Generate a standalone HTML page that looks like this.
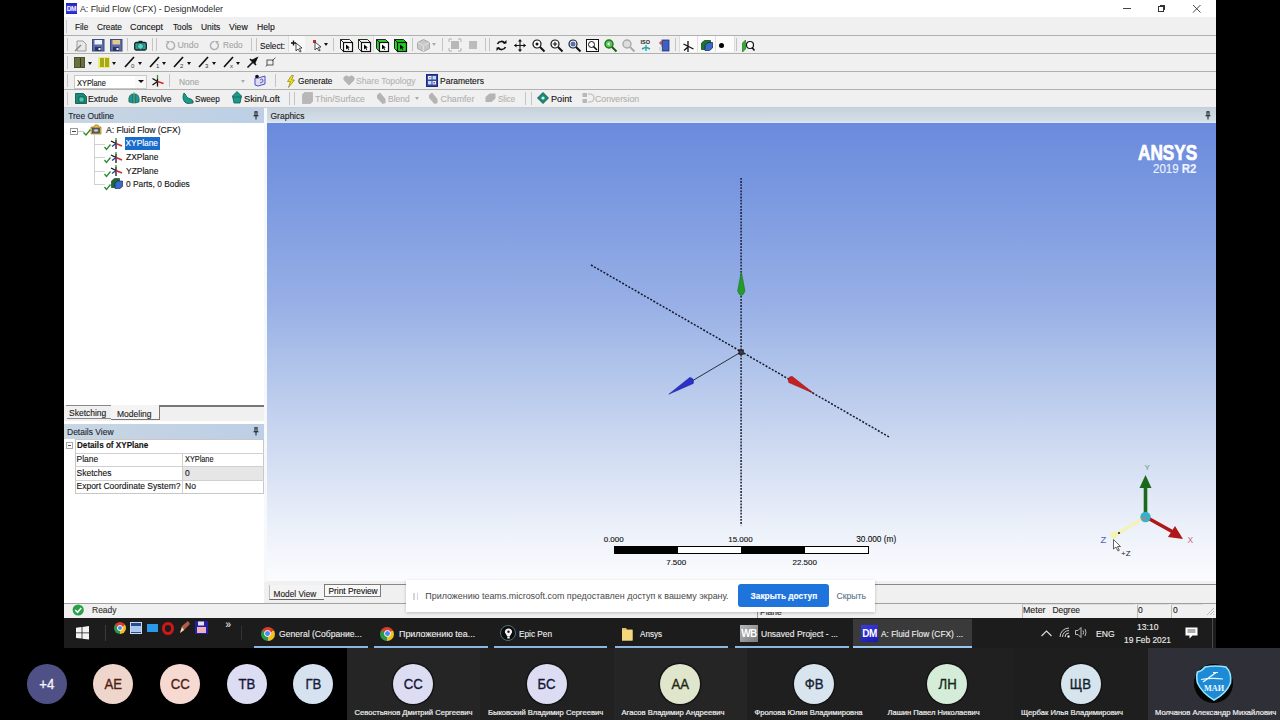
<!DOCTYPE html>
<html><head><meta charset="utf-8">
<style>
*{margin:0;padding:0;box-sizing:border-box}
html,body{width:1280px;height:720px;overflow:hidden;background:#000;font-family:"Liberation Sans",sans-serif;position:relative}
.a{position:absolute}
.t{position:absolute;white-space:nowrap;font-size:8.5px;color:#141414;line-height:12px;-webkit-text-stroke:0.12px currentColor}
.hl{position:absolute;height:1px;background:#b0b0b0}
.vs{position:absolute;width:1px;height:13px;background:#c4c4c4}
.dd{position:absolute;width:0;height:0;border-left:2.5px solid transparent;border-right:2.5px solid transparent;border-top:3px solid #111}
svg{position:absolute;overflow:visible}
.g{color:#a6a6a6}
#row1 .t{margin-top:1.2px}
#row1 svg{margin-top:0.8px}
#row3 .t{margin-top:0.6px}
#row4 .t{margin-top:1.3px}
</style></head><body>
<!-- app window -->
<div class="a" style="left:64px;top:0;width:1152px;height:618px;background:#f0f0f0"></div>
<!-- title bar -->
<div class="a" style="left:64px;top:0;width:1152px;height:17px;background:#fff"></div>
<div class="a" style="left:65.5px;top:2.5px;width:11.5px;height:11.5px;background:linear-gradient(#2020b8,#4a4af0 60%,#2424c0);color:#f0f0ff;font-size:6.5px;font-weight:bold;line-height:11.5px;text-align:center;letter-spacing:-0.6px">DM</div>
<div class="t" style="left:80px;top:3px;font-size:8.75px;color:#2a2a2a;-webkit-text-stroke:0">A: Fluid Flow (CFX) - DesignModeler</div>
<div class="a" style="left:1123px;top:8px;width:8px;height:1px;background:#444"></div>
<div class="a" style="left:1158px;top:6px;width:6px;height:6px;border:1px solid #333"></div>
<div class="a" style="left:1160px;top:5px;width:5px;height:1px;background:#333"></div>
<div class="a" style="left:1164px;top:5px;width:1px;height:5px;background:#333"></div>
<svg style="left:1193px;top:5px" width="8" height="8"><path d="M0 0L7.5 7.5M7.5 0L0 7.5" stroke="#333" stroke-width="0.9"/></svg>

<!-- menu -->
<div class="a" style="left:66px;top:20px;width:1px;height:13px;background:#c8c8c8"></div>
<div class="t" style="left:74.5px;top:20.8px;font-size:8.8px;transform:scaleX(0.937);transform-origin:left center">File</div>
<div class="t" style="left:96.8px;top:20.8px;font-size:8.8px;transform:scaleX(0.947);transform-origin:left center">Create</div>
<div class="t" style="left:130px;top:20.8px;font-size:8.8px;transform:scaleX(1.007);transform-origin:left center">Concept</div>
<div class="t" style="left:172.6px;top:20.8px;font-size:8.8px;transform:scaleX(0.934);transform-origin:left center">Tools</div>
<div class="t" style="left:200.8px;top:20.8px;font-size:8.8px;transform:scaleX(0.958);transform-origin:left center">Units</div>
<div class="t" style="left:228.9px;top:20.8px;font-size:8.8px;transform:scaleX(0.991);transform-origin:left center">View</div>
<div class="t" style="left:256.5px;top:20.8px;font-size:8.8px;transform:scaleX(0.983);transform-origin:left center">Help</div>

<!-- toolbar lines -->
<div class="hl" style="left:64px;top:35px;width:1152px"></div>
<div class="hl" style="left:64px;top:53px;width:1152px"></div>
<div class="hl" style="left:64px;top:71px;width:1152px"></div>
<div class="hl" style="left:64px;top:89px;width:1152px"></div>
<div class="hl" style="left:64px;top:107px;width:1152px;background:#c8ccd0"></div>
<!-- grips -->
<div class="vs" style="left:67px;top:38px"></div>
<div class="vs" style="left:67px;top:56px"></div>
<div class="vs" style="left:67px;top:74px"></div>
<div class="vs" style="left:67px;top:92px"></div>

<!-- ROW1 -->
<div id="row1">
<svg style="left:74px;top:38px" width="13" height="13"><path d="M3 2h6l3 3v7H3z" fill="#e8e8e8" stroke="#9a9a9a"/><path d="M1 12l6-6" stroke="#888" stroke-width="1.5"/></svg>
<svg style="left:91.5px;top:38.5px" width="13" height="13"><rect x="0.5" y="0.5" width="11.5" height="11.5" fill="#5a6aa6" stroke="#3c4a80"/><rect x="2.5" y="1" width="7.5" height="4.5" fill="#eef2fa"/><rect x="3" y="8" width="6" height="4" fill="#2a3660"/><rect x="6.5" y="9" width="2" height="2" fill="#f0f4ff"/></svg>
<svg style="left:110px;top:38.5px" width="13" height="13"><rect x="0.5" y="0.5" width="11.5" height="11.5" fill="#5a6aa6" stroke="#3c4a80"/><rect x="2.5" y="1" width="7.5" height="4.5" fill="#e8c890"/><rect x="3" y="8" width="6" height="4" fill="#2a3660"/><rect x="6.5" y="9" width="2" height="2" fill="#f0f4ff"/></svg>
<div class="vs" style="left:127px;top:38px"></div>
<svg style="left:133.5px;top:39.5px" width="13" height="11"><rect x="0.7" y="2.5" width="11.6" height="7.5" rx="1.5" fill="#3a9a90" stroke="#1a2628" stroke-width="1.3"/><rect x="4.5" y="0.8" width="4" height="2" fill="#1a2628"/><circle cx="6.5" cy="6.3" r="3" fill="#48d8c8" stroke="#1a3a38" stroke-width="0.6"/></svg>
<div class="vs" style="left:152px;top:38px"></div>
<div class="vs" style="left:156px;top:38px"></div>
<svg style="left:165px;top:39px" width="11" height="11"><path d="M2.5 3A4 4 0 1 0 5.5 1.5" fill="none" stroke="#b0b0b0" stroke-width="1.5"/><path d="M1 1l2.5 3L5 1z" fill="#b0b0b0"/></svg>
<div class="t g" style="left:177.5px;top:38px;font-size:8.8px;transform:scaleX(1.000);transform-origin:left center">Undo</div>
<svg style="left:209px;top:39px" width="11" height="11"><path d="M8.5 3A4 4 0 1 1 5.5 1.5" fill="none" stroke="#b0b0b0" stroke-width="1.5"/><path d="M10 1l-2.5 3L6 1z" fill="#b0b0b0"/></svg>
<div class="t g" style="left:222.5px;top:38px;font-size:8.8px;transform:scaleX(0.932);transform-origin:left center">Redo</div>
<div class="vs" style="left:251px;top:38px"></div>
<div class="vs" style="left:256px;top:38px"></div>
<div class="t" style="left:259.5px;top:38.8px;font-size:8.8px;transform:scaleX(0.932);transform-origin:left center">Select:</div>
<div class="a" style="left:288px;top:36px;width:17px;height:16px;background:#f8f8f8;border-left:1px solid #ddd"></div>
<svg style="left:290px;top:39px" width="14" height="12"><path d="M1 3h5M3.5 0.5v5" stroke="#111" stroke-width="1.3"/><path d="M6 3l0 8 2-2 2 3 1.2-.7-2-3 2.8-.3z" fill="#fff" stroke="#222" stroke-width="0.8"/></svg>
<svg style="left:313px;top:39px" width="10" height="12"><rect x="0" y="0" width="3" height="3" fill="#c03030"/><path d="M2 2l0 8 2-2 2 3 1.2-.7-2-3 2.8-.3z" fill="#fff" stroke="#222" stroke-width="0.8"/></svg>
<div class="dd" style="left:323.5px;top:43px"></div>
<div class="vs" style="left:333px;top:38px"></div>
<svg style="left:340px;top:38.2px" width="13" height="13"><path d="M0.5 0.5h9l3 3h-9z" fill="#fff" stroke="#111" stroke-width="0.9"/><path d="M0.5 0.5l3 3v9l-3-3z" fill="#fff" stroke="#111" stroke-width="0.9"/><rect x="3.5" y="3.5" width="9" height="9" fill="#fff" stroke="#111" stroke-width="1.2"/><path d="M6 5.5v5l1.3-1.3 1.2 1.8.8-.5-1.2-1.8 1.8-.2z" fill="#000"/></svg>
<svg style="left:358px;top:38.2px" width="13" height="13"><path d="M0.5 0.5h9l3 3h-9z" fill="#e8f8e8" stroke="#111" stroke-width="0.9"/><path d="M0.5 0.5l3 3v9l-3-3z" fill="#e8f8e8" stroke="#111" stroke-width="0.9"/><rect x="3.5" y="3.5" width="9" height="9" fill="#fff" stroke="#111" stroke-width="1.2"/><path d="M6 5.5v5l1.3-1.3 1.2 1.8.8-.5-1.2-1.8 1.8-.2z" fill="#000"/></svg>
<div class="a" style="left:373px;top:36px;width:36px;height:16px;background:#f6f6f6;border-left:1px solid #ddd"></div>
<svg style="left:376px;top:38.2px" width="13" height="13"><path d="M0.5 0.5h9l3 3h-9z" fill="#3c3" stroke="#111" stroke-width="0.9"/><path d="M0.5 0.5l3 3v9l-3-3z" fill="#3c3" stroke="#111" stroke-width="0.9"/><rect x="3.5" y="3.5" width="9" height="9" fill="#fff" stroke="#111" stroke-width="1.2"/><path d="M6 5.5v5l1.3-1.3 1.2 1.8.8-.5-1.2-1.8 1.8-.2z" fill="#000"/></svg>
<svg style="left:394px;top:38.2px" width="13" height="13"><path d="M0.5 0.5h9l3 3h-9z" fill="#1c1" stroke="#111" stroke-width="0.9"/><path d="M0.5 0.5l3 3v9l-3-3z" fill="#2d2" stroke="#111" stroke-width="0.9"/><rect x="3.5" y="3.5" width="9" height="9" fill="#2c2" stroke="#111" stroke-width="1.2"/><path d="M6 5.5v5l1.3-1.3 1.2 1.8.8-.5-1.2-1.8 1.8-.2z" fill="#000"/></svg>
<div class="vs" style="left:412px;top:38px"></div>
<svg style="left:417px;top:38px" width="13" height="13"><path d="M6.5 0.5l6 3v6l-6 3-6-3v-6z" fill="#c8c8c8" stroke="#aaa"/><path d="M0.5 3.5l6 3 6-3M6.5 6.5v6" fill="none" stroke="#e0e0e0"/></svg>
<div class="dd" style="left:432px;top:43px;border-top-color:#aaa"></div>
<div class="vs" style="left:442px;top:38px"></div>
<svg style="left:449px;top:38px" width="12" height="12"><rect x="2" y="2" width="8" height="8" fill="#b8b8b8"/><path d="M0 3V0h3M9 0h3v3M12 9v3H9M3 12H0V9" fill="none" stroke="#b0b0b0"/></svg>
<svg style="left:468px;top:39px" width="10" height="10"><rect x="1" y="1" width="8" height="8" fill="#bcbcbc"/></svg>
<div class="vs" style="left:485px;top:38px"></div>
<div class="vs" style="left:489px;top:38px"></div>
<svg style="left:496px;top:38px" width="11" height="13"><path d="M9 4.5A4.2 4.2 0 0 0 1.5 5M2 8.5A4.2 4.2 0 0 0 9.5 8" fill="none" stroke="#111" stroke-width="1.6"/><path d="M7 4.5h3.5V1zM4 8.5H0.5V12z" fill="#111"/></svg>
<svg style="left:514px;top:38px" width="12" height="13"><path d="M6 1v11M0.5 6.5h11" stroke="#111" stroke-width="1.1"/><path d="M6 0l-2 2.5h4zM6 13l-2-2.5h4zM0 6.5l2.5-2v4zM12 6.5l-2.5-2v4z" fill="#111"/></svg>
<svg style="left:532px;top:38px" width="13" height="13"><circle cx="5" cy="5" r="4" fill="#fff" stroke="#111" stroke-width="1.2"/><circle cx="5" cy="5" r="1.5" fill="#111"/><path d="M8 8l4.5 4.5" stroke="#111" stroke-width="2"/></svg>
<svg style="left:550px;top:38px" width="13" height="13"><circle cx="5" cy="5" r="4" fill="#fff" stroke="#111" stroke-width="1.2"/><path d="M2.8 5h4.4M5 2.8v4.4" stroke="#111" stroke-width="1.1"/><path d="M8 8l4.5 4.5" stroke="#111" stroke-width="2"/></svg>
<svg style="left:568px;top:38px" width="13" height="13"><circle cx="5" cy="5" r="4" fill="#fff" stroke="#123" stroke-width="1.2"/><circle cx="5" cy="5" r="2.5" fill="#5a6fb0"/><path d="M8 8l4.5 4.5" stroke="#111" stroke-width="2"/></svg>
<svg style="left:586px;top:38px" width="13" height="13"><rect x="0.5" y="0.5" width="12" height="12" fill="#fff" stroke="#111"/><circle cx="5.5" cy="5.5" r="3" fill="none" stroke="#111"/><path d="M7.5 7.5l3.5 3.5" stroke="#111" stroke-width="1.6"/></svg>
<svg style="left:604px;top:38px" width="13" height="13"><circle cx="5" cy="5" r="4" fill="#5cc05c" stroke="#1a7a1a" stroke-width="1.4"/><path d="M3 5l2.5-2v4z" fill="#fff"/><path d="M8 8l4.5 4.5" stroke="#1a5a1a" stroke-width="2"/></svg>
<svg style="left:622px;top:38px" width="13" height="13"><circle cx="5" cy="5" r="4" fill="#ddd" stroke="#aaa" stroke-width="1.4"/><path d="M8 8l4.5 4.5" stroke="#aaa" stroke-width="2"/></svg>
<svg style="left:640px;top:38px" width="12" height="13"><text x="0.5" y="5" font-size="5.5" font-weight="bold" font-family="Liberation Sans" fill="#222">ISO</text><path d="M6 6v6M2 10l4-2 4 2" stroke="#2aa" stroke-width="1.4" fill="none"/></svg>
<svg style="left:658px;top:38px" width="12" height="13"><rect x="4" y="1" width="7" height="11" fill="#4060c0" stroke="#203080" stroke-width="0.8"/><path d="M1 4h4M3 2v4" stroke="#a33" stroke-width="1"/><rect x="1" y="8" width="3" height="4" fill="#ddd"/></svg>
<div class="vs" style="left:675px;top:38px"></div>
<div class="a" style="left:679px;top:36px;width:56px;height:16px;background:#fbfbfb;border-left:1px solid #ddd;border-right:1px solid #ddd"></div>
<div class="a" style="left:697px;top:36px;width:1px;height:16px;background:#e0e0e0"></div>
<div class="a" style="left:715px;top:36px;width:1px;height:16px;background:#e0e0e0"></div>
<svg style="left:683px;top:39px" width="11" height="12"><path d="M5 1v11M0.5 4L10.5 9M1 10.5L5 7" stroke="#111" stroke-width="1.3"/></svg>
<svg style="left:701px;top:39px" width="12" height="11"><path d="M0.5 3l3-2.5h6v6l-3 3h-6z" fill="#1a7a2a" stroke="#0a3a10" stroke-width="0.7"/><path d="M4 5l3-2.5h4.5v5.5l-3 2.5H4z" fill="#3a6ad0" stroke="#123" stroke-width="0.7"/></svg>
<div class="a" style="left:719px;top:42.5px;width:5px;height:5px;border-radius:50%;background:#000"></div>
<div class="vs" style="left:736px;top:38px"></div>
<svg style="left:742px;top:38px" width="13" height="13"><path d="M0.5 4l3-3v9l-3 3z" fill="#3a3" stroke="#161" stroke-width="0.6"/><circle cx="8" cy="6" r="3.5" fill="#fff" stroke="#111" stroke-width="1.2"/><path d="M10 8.5l2.5 3" stroke="#111" stroke-width="1.6"/></svg>
</div>

<!-- ROW2 -->
<div id="row2">
<div class="a" style="left:74px;top:57px;width:11px;height:11px;background:#6b7040;border:1px solid #50542c"></div>
<div class="a" style="left:79.5px;top:58px;width:1px;height:9px;background:#3a3e20"></div>
<div class="dd" style="left:87.5px;top:62px"></div>
<div class="a" style="left:98px;top:57px;width:12px;height:11px;background:#e8ec80"></div>
<div class="a" style="left:99.5px;top:58px;width:4px;height:9px;background:#a8a818"></div>
<div class="a" style="left:105px;top:58px;width:4px;height:9px;background:#a8a818"></div>
<div class="dd" style="left:112px;top:62px"></div>
<svg style="left:124px;top:56px" width="15" height="12"><path d="M1 11L10 1" stroke="#111" stroke-width="1.7"/><text x="7" y="11.5" font-size="6" font-family="Liberation Sans" fill="#333">0</text></svg>
<div class="dd" style="left:137.5px;top:62px"></div>
<svg style="left:149px;top:56px" width="15" height="12"><path d="M1 11L10 1" stroke="#111" stroke-width="1.7"/><text x="7" y="11.5" font-size="6" font-family="Liberation Sans" fill="#333">1</text></svg>
<div class="dd" style="left:162px;top:62px"></div>
<svg style="left:173px;top:56px" width="15" height="12"><path d="M1 11L10 1" stroke="#111" stroke-width="1.7"/><text x="7" y="11.5" font-size="6" font-family="Liberation Sans" fill="#333">2</text></svg>
<div class="dd" style="left:187px;top:62px"></div>
<svg style="left:198px;top:56px" width="15" height="12"><path d="M1 11L10 1" stroke="#111" stroke-width="1.7"/><text x="7" y="11.5" font-size="6" font-family="Liberation Sans" fill="#333">3</text></svg>
<div class="dd" style="left:212px;top:62px"></div>
<svg style="left:223px;top:56px" width="15" height="12"><path d="M1 11L10 1" stroke="#111" stroke-width="1.7"/><text x="7" y="11.5" font-size="6" font-family="Liberation Sans" fill="#333">x</text></svg>
<div class="dd" style="left:236px;top:62px"></div>
<svg style="left:247px;top:56px" width="12" height="12"><path d="M0.5 11.5L6 6" stroke="#111" stroke-width="1.6"/><path d="M11.5 0.5L4 4 8 8z" fill="#111"/><path d="M3 3l6 6" stroke="#111" stroke-width="1.6"/></svg>
<svg style="left:266px;top:57px" width="10" height="10"><rect x="1" y="3" width="6" height="5" fill="none" stroke="#444" stroke-width="0.9"/><path d="M6 4l3.5-3.5M1 8l-1 1.5" stroke="#444" stroke-width="0.9"/></svg>
</div>

<!-- ROW3 -->
<div id="row3">
<div class="a" style="left:74px;top:74.5px;width:73px;height:14px;background:#fff;border:1px solid #c8c8c8"></div>
<div class="a" style="left:135px;top:75.5px;width:11px;height:12px;background:#f8f8f8"></div>
<div class="dd" style="left:138px;top:79.5px;border-left-width:3px;border-right-width:3px;border-top-width:3.5px"></div>
<div class="t" style="left:76.5px;top:76.8px;font-size:8.4px;transform:scaleX(0.885);transform-origin:left center">XYPlane</div>
<svg style="left:152px;top:74px" width="12" height="13"><path d="M5.5 1V4.5" stroke="#2a9a2a" stroke-width="1.3"/><path d="M5.5 4.5V12.5M0.5 4.5L5.5 7.5M0.5 11L5.5 7.5" stroke="#111" stroke-width="1.3"/><path d="M5.5 7.5L11.5 9.5" stroke="#d02828" stroke-width="1.6"/></svg>
<div class="vs" style="left:169px;top:74px"></div>
<div class="t g" style="left:179px;top:75.2px;font-size:8.8px;transform:scaleX(0.960);transform-origin:left center">None</div>
<div class="dd" style="left:240.5px;top:79.5px;border-top-color:#aaa"></div>
<svg style="left:254px;top:74px" width="12" height="13"><path d="M1 4l3 0 7-2v8l-7 2-3-1z" fill="#dde" stroke="#4040c0" stroke-width="0.9"/><circle cx="3" cy="2.5" r="1.8" fill="#111"/><path d="M6 6q2-2 3 0t-3 3" fill="none" stroke="#4040c0" stroke-width="0.8"/></svg>
<div class="vs" style="left:275px;top:74px"></div>
<svg style="left:286px;top:74.5px" width="10" height="13"><path d="M5.5 0.5L1.5 6.5H4.5L2.5 12.5L8.5 5H5.5L7.5 0.5Z" fill="#f2e41c" stroke="#8a8210" stroke-width="0.7"/></svg>
<div class="t" style="left:297.7px;top:74px;font-size:8.8px;transform:scaleX(0.937);transform-origin:left center">Generate</div>
<svg style="left:343px;top:75px" width="12" height="11"><path d="M6 10.5L1 5.5A2.8 2.8 0 0 1 6 2a2.8 2.8 0 0 1 5 3.5z" fill="#b4b4b4"/></svg>
<div class="t g" style="left:356px;top:74px;font-size:8.8px;color:#b4b4b4;transform:scaleX(0.977);transform-origin:left center">Share Topology</div>
<svg style="left:426px;top:74px" width="12" height="13"><rect x="0.5" y="0.5" width="11" height="12" fill="#2c4aa8" stroke="#1a2a78" stroke-width="1"/><rect x="2" y="2" width="3.5" height="3.5" fill="#e8f0ff"/><rect x="6.5" y="2" width="3.5" height="3.5" fill="#c8d8f8"/><rect x="2" y="7" width="3.5" height="3.5" fill="#c8d8f8"/><rect x="6.5" y="7" width="3.5" height="3.5" fill="#e8f0ff"/><path d="M3 3.7h1.5M7.5 8.7h1.5M8.2 8v1.5" stroke="#c02020" stroke-width="0.8"/></svg>
<div class="t" style="left:440px;top:74px;font-size:8.8px;transform:scaleX(0.966);transform-origin:left center">Parameters</div>
</div>

<!-- ROW4 -->
<div id="row4">
<svg style="left:75px;top:92px" width="12" height="12"><path d="M0.5 1.5h8l3 3v7h-11z" fill="#1a8a7a" stroke="#0a4a40" stroke-width="0.8"/><rect x="4" y="5" width="5" height="5" fill="#4fc8b8" stroke="#0a4a40" stroke-width="0.7"/></svg>
<div class="t" style="left:88.2px;top:92px;font-size:8.8px;transform:scaleX(0.983);transform-origin:left center">Extrude</div>
<svg style="left:128px;top:92px" width="12" height="12"><path d="M6 0.5v11" stroke="#0a5a50" stroke-width="1"/><path d="M5 2C1 2 0.5 7 1 10l4 1zM7 2c4 0 4.5 5 4 8l-4 1z" fill="#1a9a8a" stroke="#0a5a50" stroke-width="0.7"/></svg>
<div class="t" style="left:141.3px;top:92px;font-size:8.8px;transform:scaleX(0.959);transform-origin:left center">Revolve</div>
<svg style="left:182px;top:92px" width="12" height="12"><path d="M2 1C0 5 1 11 6 11.5L11 11C12 8 9 7 6 6 4 5 4 2 2 1z" fill="#1a9a8a" stroke="#0a5a50" stroke-width="0.8"/></svg>
<div class="t" style="left:195.25px;top:92px;font-size:8.8px;transform:scaleX(0.920);transform-origin:left center">Sweep</div>
<svg style="left:232px;top:91px" width="10" height="13"><path d="M5 0.5L9.5 5 8 12H2L0.5 5z" fill="#1a9a8a" stroke="#0a5a50" stroke-width="0.8"/><path d="M0.5 6h9" stroke="#0a5a50" stroke-width="0.6"/></svg>
<div class="t" style="left:243.7px;top:92px;font-size:8.8px;transform:scaleX(1.045);transform-origin:left center">Skin/Loft</div>
<div class="vs" style="left:289px;top:92px"></div>
<div class="vs" style="left:293.5px;top:92px"></div>
<svg style="left:302px;top:92px" width="11" height="12"><path d="M0.5 2.5l2-2h8v9l-2 2h-8z" fill="#b8b8b8" stroke="#aaa" stroke-width="0.6"/></svg>
<div class="t g" style="left:314.8px;top:92px;font-size:8.8px;color:#b0b0b0;transform:scaleX(1.002);transform-origin:left center">Thin/Surface</div>
<svg style="left:376px;top:92px" width="10" height="12"><path d="M1 3l3-2.5 5.5 6.5v4l-3 1L1 6z" fill="#b4b4b4"/></svg>
<div class="t g" style="left:388.3px;top:92px;font-size:8.8px;color:#b0b0b0;transform:scaleX(0.966);transform-origin:left center">Blend</div>
<div class="dd" style="left:414.5px;top:97px;border-top-color:#aaa"></div>
<svg style="left:428px;top:92px" width="10" height="12"><path d="M1 3l3-2.5 5.5 6.5v4l-3 1L1 6z" fill="#b4b4b4"/></svg>
<div class="t g" style="left:440.6px;top:92px;font-size:8.8px;color:#b0b0b0;transform:scaleX(1.000);transform-origin:left center">Chamfer</div>
<svg style="left:485px;top:93px" width="11" height="10"><path d="M0.5 4l4-3.5h6v5l-4 3.5h-6z" fill="#b4b4b4"/></svg>
<div class="t g" style="left:498.4px;top:92px;font-size:8.8px;color:#b0b0b0;transform:scaleX(0.903);transform-origin:left center">Slice</div>
<div class="vs" style="left:525px;top:92px"></div>
<div class="vs" style="left:530.5px;top:92px"></div>
<svg style="left:537px;top:92px" width="12" height="12"><path d="M6 0.5L11.5 6 6 11.5 0.5 6z" fill="#1a8a7a" stroke="#0a4a40" stroke-width="0.8"/><circle cx="6" cy="6" r="1.6" fill="#cfe"/></svg>
<div class="t" style="left:550.7px;top:92px;font-size:8.8px;transform:scaleX(1.034);transform-origin:left center">Point</div>
<svg style="left:582px;top:92px" width="11" height="12"><rect x="0.5" y="1" width="4.5" height="4" fill="#b8b8b8"/><rect x="0.5" y="7" width="4.5" height="4" fill="#b8b8b8"/><path d="M6 2h2a3.5 3.5 0 0 1 0 8H6" fill="none" stroke="#b8b8b8" stroke-width="1.2"/></svg>
<div class="t g" style="left:595.3px;top:92px;font-size:8.8px;color:#b0b0b0;transform:scaleX(0.991);transform-origin:left center">Conversion</div>
</div>

<!-- TREE OUTLINE -->
<div class="a" style="left:64px;top:108px;width:200px;height:297px;background:#fff"></div>
<div class="a" style="left:64px;top:108px;width:200px;height:15px;background:linear-gradient(90deg,#c9d6e2,#bccfe6)"></div>
<div class="t" style="left:68.2px;top:110.3px;font-size:8.4px;color:#1c2834">Tree Outline</div>
<svg style="left:253px;top:111px" width="6" height="9"><path d="M1.5 0.8h3M2 0.8v4M4 0.8v4M0.5 4.8h5M3 4.8v3.7" fill="none" stroke="#1a1a1a" stroke-width="1"/></svg>
<div id="tree">
<div class="a" style="left:69.5px;top:127.5px;width:8px;height:7px;border:1px solid #999;background:#fff"></div>
<div class="a" style="left:71.5px;top:130.5px;width:4px;height:1px;background:#444"></div>
<div class="a" style="left:78px;top:131px;width:6px;height:1px;background:#ccc"></div>
<svg style="left:83px;top:129px" width="8" height="7"><path d="M0.5 3.5L3 6 7.5 0.5" fill="none" stroke="#2a8a2a" stroke-width="1.3"/></svg>
<svg style="left:90px;top:123px" width="12" height="12"><path d="M1 4h3l1-2h3l1 2h2v7H1z" fill="#eec040" stroke="#886010" stroke-width="0.6"/><rect x="2.5" y="5" width="7" height="5" fill="#5a6a70" stroke="#222" stroke-width="0.5"/><ellipse cx="6" cy="7.5" rx="2" ry="1.3" fill="#ccd"/></svg>
<div class="t" style="left:106px;top:124px;font-size:8.55px">A: Fluid Flow (CFX)</div>
<div class="a" style="left:94px;top:135px;width:1px;height:49px;background:#d0d0d0"></div>
<div class="a" style="left:94px;top:144px;width:11px;height:1px;background:#d0d0d0"></div>
<div class="a" style="left:94px;top:157px;width:11px;height:1px;background:#d0d0d0"></div>
<div class="a" style="left:94px;top:171px;width:11px;height:1px;background:#d0d0d0"></div>
<div class="a" style="left:94px;top:184px;width:11px;height:1px;background:#d0d0d0"></div>
<svg style="left:104px;top:143.5px" width="7" height="6"><path d="M0.5 3L2.5 5.5 6.5 0.5" fill="none" stroke="#2a8a2a" stroke-width="1.3"/></svg>
<svg style="left:104px;top:157px" width="7" height="6"><path d="M0.5 3L2.5 5.5 6.5 0.5" fill="none" stroke="#2a8a2a" stroke-width="1.3"/></svg>
<svg style="left:104px;top:170.5px" width="7" height="6"><path d="M0.5 3L2.5 5.5 6.5 0.5" fill="none" stroke="#2a8a2a" stroke-width="1.3"/></svg>
<svg style="left:104px;top:184px" width="7" height="6"><path d="M0.5 3L2.5 5.5 6.5 0.5" fill="none" stroke="#2a8a2a" stroke-width="1.3"/></svg>
<svg style="left:111px;top:137px" width="11" height="12"><path d="M5 3v9" stroke="#111" stroke-width="1.3"/><path d="M5 1v2.5" stroke="#2a9a2a" stroke-width="1.3"/><path d="M0 4L5 6.5" stroke="#111" stroke-width="1.3"/><path d="M5 6.5L1 9.5" stroke="#2a3a9a" stroke-width="1.4"/><path d="M5 6.5L11 9" stroke="#c03030" stroke-width="1.5"/></svg>
<svg style="left:111px;top:151px" width="11" height="12"><path d="M5 3v9" stroke="#111" stroke-width="1.3"/><path d="M5 1v2.5" stroke="#2a9a2a" stroke-width="1.3"/><path d="M0 4L5 6.5" stroke="#111" stroke-width="1.3"/><path d="M5 6.5L1 9.5" stroke="#2a3a9a" stroke-width="1.4"/><path d="M5 6.5L11 9" stroke="#c03030" stroke-width="1.5"/></svg>
<svg style="left:111px;top:164px" width="11" height="12"><path d="M5 3v9" stroke="#111" stroke-width="1.3"/><path d="M5 1v2.5" stroke="#2a9a2a" stroke-width="1.3"/><path d="M0 4L5 6.5" stroke="#111" stroke-width="1.3"/><path d="M5 6.5L1 9.5" stroke="#2a3a9a" stroke-width="1.4"/><path d="M5 6.5L11 9" stroke="#c03030" stroke-width="1.5"/></svg>
<svg style="left:111px;top:178px" width="12" height="11"><path d="M0.5 3l3-2.5h5v6l-3 3h-5z" fill="#1a6a3a" stroke="#0a3a10" stroke-width="0.6"/><path d="M4 5l2.5-2h5v5.5l-2.5 2H4z" fill="#3a6ad0" stroke="#123" stroke-width="0.6"/></svg>
<div class="a" style="left:125px;top:137px;width:35px;height:12.5px;background:#1a6ccc"></div>
<div class="t" style="left:125.5px;top:137.3px;font-size:8.35px;color:#fff">XYPlane</div>
<div class="t" style="left:126px;top:150.8px;font-size:8.45px">ZXPlane</div>
<div class="t" style="left:126px;top:164.5px;font-size:8.45px">YZPlane</div>
<div class="t" style="left:126px;top:177.7px;font-size:8.4px">0 Parts, 0 Bodies</div>
</div>

<!-- tabs Sketching/Modeling -->
<div class="a" style="left:64px;top:405px;width:200px;height:16px;background:#f0f0f0"></div>
<div class="a" style="left:66px;top:405px;width:45px;height:1px;background:#888"></div>
<div class="a" style="left:160px;top:405px;width:104px;height:1.5px;background:#777"></div>
<div class="a" style="left:66.5px;top:406px;width:44.5px;height:13px;background:#f0f0f0;border-bottom:1px solid #888"></div>
<div class="t" style="left:69px;top:407px;font-size:8.5px;color:#222">Sketching</div>
<div class="a" style="left:111px;top:405px;width:49px;height:15px;background:#f4f4f4;border-right:1px solid #777;border-bottom:1px solid #777"></div>
<div class="t" style="left:117px;top:408px;font-size:8.5px;color:#222">Modeling</div>

<!-- DETAILS VIEW -->
<div class="a" style="left:64px;top:421px;width:200px;height:182px;background:#fff"></div>
<div class="a" style="left:64px;top:424px;width:200px;height:15px;background:linear-gradient(90deg,#c9d6e2,#bccfe6)"></div>
<div class="t" style="left:67px;top:425.5px;font-size:8.5px;color:#1c2834">Details View</div>
<svg style="left:253px;top:427px" width="6" height="9"><path d="M1.5 0.8h3M2 0.8v4M4 0.8v4M0.5 4.8h5M3 4.8v3.7" fill="none" stroke="#1a1a1a" stroke-width="1"/></svg>
<div class="a" style="left:66px;top:442px;width:7px;height:7px;border:1px solid #aaa;background:#fff"></div>
<div class="a" style="left:68px;top:445px;width:3px;height:1px;background:#555"></div>
<div class="a" style="left:74.5px;top:439px;width:189.5px;height:54.5px;border:1px solid #c8c8c8"></div>
<div class="a" style="left:74.5px;top:452.5px;width:189.5px;height:1px;background:#d0d0d0"></div>
<div class="a" style="left:74.5px;top:466px;width:189.5px;height:1px;background:#d0d0d0"></div>
<div class="a" style="left:74.5px;top:479.5px;width:189.5px;height:1px;background:#d0d0d0"></div>
<div class="a" style="left:182px;top:453px;width:1px;height:40px;background:#d0d0d0"></div>
<div class="a" style="left:183px;top:467px;width:80px;height:12.5px;background:#e6e6e6"></div>
<div class="t" style="left:77px;top:439.7px;font-size:8.15px;font-weight:bold">Details of XYPlane</div>
<div class="t" style="left:76.5px;top:453.2px;font-size:8.5px">Plane</div>
<div class="t" style="left:185.4px;top:453.4px;font-size:8.4px;transform:scaleX(0.875);transform-origin:left center">XYPlane</div>
<div class="t" style="left:76.5px;top:466.7px;font-size:8.5px">Sketches</div>
<div class="t" style="left:185px;top:466.7px;font-size:8.5px">0</div>
<div class="t" style="left:76.5px;top:480.2px;font-size:8.5px">Export Coordinate System?</div>
<div class="t" style="left:185px;top:480.2px;font-size:8.5px">No</div>

<!-- GRAPHICS -->
<div class="a" style="left:264px;top:108px;width:3px;height:474px;background:#f6f8fa"></div>
<div class="a" style="left:267px;top:108px;width:949px;height:15px;background:linear-gradient(#c6d2dc,#d2dde8 80%,#dfe9f4)"></div>
<div class="t" style="left:270.5px;top:110.3px;font-size:8.5px;color:#222">Graphics</div>
<svg style="left:1205px;top:111px" width="6" height="9"><path d="M1.5 0.8h3M2 0.8v4M4 0.8v4M0.5 4.8h5M3 4.8v3.7" fill="none" stroke="#1a1a1a" stroke-width="1"/></svg>
<div class="a" style="left:267px;top:123px;width:949px;height:458px;background:linear-gradient(#6a8add 0%,#7f9de1 20%,#98b0e6 40%,#aabfe9 50%,#bccced 60%,#cdd9f1 70%,#dee6f6 80%,#eef2fa 90%,#fbfcfe 100%)"></div>

<!-- ANSYS logo -->
<div class="t" style="left:1138px;top:140.5px;font-size:21.8px;line-height:24px;font-weight:bold;color:#fff;-webkit-text-stroke:0.7px #fff;transform:scaleX(0.79);transform-origin:left center">ANSYS</div>
<div class="t" style="left:1153px;top:161.5px;font-size:13.5px;line-height:14px;color:#f0f4ff;transform:scaleX(0.85);transform-origin:left center">2019 <b>R2</b></div>

<!-- axes -->
<svg style="left:267px;top:123px" width="949" height="458">
<g transform="translate(-267,-123)">
<line x1="741.1" y1="178" x2="741.1" y2="525.5" stroke="#161a30" stroke-width="1.5" stroke-dasharray="1.8 1.3"/>
<line x1="591" y1="265" x2="890" y2="437.5" stroke="#161a30" stroke-width="1.5" stroke-dasharray="2 1.6"/>
<line x1="741" y1="352" x2="692" y2="381" stroke="#2a2e44" stroke-width="1"/>
<path d="M741.3 271.5 L745 291 Q741.3 300 737.6 291 Z" fill="#239a2c" stroke="#1a6a20" stroke-width="0.5"/>
<path d="M668.8 394.2 L689.7 377.5 Q694.5 378 693.3 383.5 Z" fill="#2a30c8" stroke="#1a2090" stroke-width="0.5"/>
<path d="M813.7 393.3 L792.3 376.5 Q787 376 788.7 382.5 Z" fill="#c42020" stroke="#901010" stroke-width="0.5"/>
<rect x="739" y="350" width="4.2" height="4.2" fill="#444" stroke="#111" stroke-width="1"/>
</g>
</svg>

<!-- scale bar -->
<div class="a" style="left:614px;top:545.5px;width:255px;height:8.5px;background:#fff;border:1px solid #000"></div>
<div class="a" style="left:614px;top:545.5px;width:64px;height:8.5px;background:#000"></div>
<div class="a" style="left:741px;top:545.5px;width:64px;height:8.5px;background:#000"></div>
<div class="t" style="left:603.7px;top:534px;font-size:8px;color:#111">0.000</div>
<div class="t" style="left:728.2px;top:534px;font-size:8px;color:#111">15.000</div>
<div class="t" style="left:856.2px;top:534px;font-size:8.27px;color:#111">30.000 (m)</div>
<div class="t" style="left:666.2px;top:557px;font-size:8px;color:#111">7.500</div>
<div class="t" style="left:792.5px;top:557px;font-size:8px;color:#111">22.500</div>

<!-- triad -->
<svg style="left:1095px;top:460px" width="110" height="100">
<g transform="translate(-1095,-460)">
<line x1="1145" y1="517" x2="1114" y2="536" stroke="#f6f2b0" stroke-width="3"/>
<circle cx="1114" cy="535" r="3.5" fill="#f6f3b0"/>
<line x1="1145.5" y1="517" x2="1145.5" y2="487" stroke="#1a6a1a" stroke-width="3.6"/>
<path d="M1145.5 475 L1151.5 488 L1139.5 488 Z" fill="#1a6a1a"/>
<line x1="1146" y1="517" x2="1173" y2="532" stroke="#b01818" stroke-width="3.6"/>
<path d="M1183 539 L1168 537 L1175 526 Z" fill="#b01818"/>
<circle cx="1145.5" cy="517" r="5.2" fill="#3ab0c8"/>
<circle cx="1144" cy="518.5" r="2" fill="#c87878" opacity="0.6"/>
<text x="1144.5" y="470" font-size="8" font-family="Liberation Sans" fill="#5a9a80">Y</text>
<text x="1187.5" y="542.5" font-size="8.5" font-family="Liberation Sans" fill="#d06a80">X</text>
<text x="1100.5" y="543" font-size="9.5" font-family="Liberation Sans" fill="#5464b4">Z</text>
<path d="M1113.5 539.5 L1113.5 549 L1116 547 L1118 551 L1119.3 550.3 L1117.5 546.5 L1120.5 546.5 Z" fill="#fff" stroke="#222" stroke-width="0.7"/>
<circle cx="1119" cy="533" r="1.1" fill="#222"/>
<text x="1121" y="556" font-size="8" font-family="Liberation Sans" fill="#222">+Z</text>
</g>
</svg>

<!-- Model View / Print Preview tabs -->
<div class="a" style="left:267px;top:581px;width:949px;height:22px;background:#f0f0f0"></div>
<div class="a" style="left:324px;top:584px;width:892px;height:1px;background:#888"></div>
<div class="a" style="left:268.7px;top:585px;width:55.5px;height:14.5px;background:#f4f4f4;border-bottom:1.2px solid #666;border-left:1px solid #bbb"></div>
<div class="t" style="left:273.5px;top:587.5px;font-size:8.3px;color:#222">Model View</div>
<div class="a" style="left:324.4px;top:584.4px;width:57px;height:13px;background:#f8f8f8;border:1px solid #7a7a7a"></div>
<div class="t" style="left:328.5px;top:585.3px;font-size:8.35px;color:#111">Print Preview</div>

<!-- status bar -->
<div class="a" style="left:64px;top:602.5px;width:1152px;height:1px;background:#a0a0a0"></div>
<div class="a" style="left:64px;top:603.5px;width:1152px;height:14.5px;background:#f0f0f0"></div>
<svg style="left:71.5px;top:604.3px" width="13" height="12"><circle cx="6.2" cy="6" r="5.6" fill="#28a048"/><path d="M3.2 6L5.5 8.3 9.3 4" fill="none" stroke="#fff" stroke-width="1.5"/></svg>
<div class="t" style="left:92px;top:604px;font-size:8.5px;color:#333">Ready</div>
<div class="a" style="left:1021.5px;top:603.5px;width:113.5px;height:14px;border-left:1px solid #bbb;border-top:1px solid #ddd"></div>
<div class="a" style="left:1136.5px;top:603.5px;width:32px;height:14px;border-left:1px solid #bbb;border-top:1px solid #ddd"></div>
<div class="a" style="left:1171px;top:603.5px;width:32px;height:14px;border-left:1px solid #bbb;border-top:1px solid #ddd"></div>
<div class="t" style="left:1023px;top:604px;font-size:8.8px;color:#222">Meter</div>
<div class="t" style="left:1052.4px;top:604px;font-size:8.45px;color:#222">Degree</div>
<div class="t" style="left:1138px;top:604px;font-size:8.5px;color:#222">0</div>
<div class="t" style="left:1173px;top:604px;font-size:8.5px;color:#222">0</div>
<svg style="left:1205px;top:606px" width="10" height="10"><path d="M9 2L2 9M9 5L5 9M9 8L8 9" stroke="#aaa" stroke-width="0.8"/></svg>

<div class="a" style="left:757px;top:604px;width:1px;height:14px;background:#999"></div>
<div class="t" style="left:760px;top:606px;font-size:8.5px;color:#333">Plane</div>
<!-- notification popup -->
<div class="a" style="left:405.5px;top:579.5px;width:469px;height:32px;background:#fff;box-shadow:0 1px 3px rgba(0,0,0,0.22)"></div>
<div class="a" style="left:413px;top:592.5px;width:1.6px;height:7px;background:#d4d4d4"></div>
<div class="a" style="left:416.5px;top:592.5px;width:1.6px;height:7px;background:#d4d4d4"></div>
<div class="t" style="left:425.3px;top:589.5px;font-size:8.95px;color:#484848;-webkit-text-stroke:0">Приложению teams.microsoft.com предоставлен доступ к вашему экрану.</div>
<div class="a" style="left:738.4px;top:584px;width:91px;height:23.3px;background:#1f74dc;border-radius:3px"></div>
<div class="t" style="left:750.6px;top:589.5px;font-size:8.33px;color:#fff;font-weight:bold">Закрыть доступ</div>
<div class="t" style="left:836.5px;top:589.5px;font-size:8.64px;color:#62728c">Скрыть</div>

<!-- TASKBAR -->
<div class="a" style="left:64px;top:618px;width:1152px;height:30px;background:#1c1c1c"></div>

<!-- taskbar content -->
<svg style="left:75.5px;top:626px" width="13" height="14"><path d="M0 1.8L5.6 1v5.4H0zM6.4 0.9L13 0v6.4H6.4zM0 7.2h5.6v5.4L0 11.9zM6.4 7.2H13v6.4l-6.6-.9z" fill="#f4f4f4"/></svg>
<div class="a" style="left:104.5px;top:625px;width:1px;height:16px;background:#3a3a3a"></div>
<div class="a" style="left:113.5px;top:621.7px;width:12px;height:12px;border-radius:50%;background:conic-gradient(from -60deg,#dc3c2c 0 120deg,#f4c020 120deg 240deg,#2a9a48 240deg 360deg)"></div>
<div class="a" style="left:116.5px;top:624.7px;width:6px;height:6px;border-radius:50%;background:#4a8af0;border:1px solid #fff"></div>
<div class="a" style="left:129.6px;top:622px;width:12.5px;height:12px;background:#2a4a90;border:1px solid #c8d8f0"></div>
<div class="a" style="left:131px;top:626px;width:10px;height:6px;background:#a8c8f0"></div>
<div class="a" style="left:146.8px;top:624px;width:11px;height:8px;background:#2a9ae8"></div>
<div class="a" style="left:161.6px;top:621.5px;width:12.4px;height:13px;border-radius:50%;border:3px solid #d01818"></div>
<svg style="left:178.8px;top:621px" width="11" height="13"><path d="M1 12L3 5 9 0l2 3-6 6z" fill="#b06040"/><path d="M1 12L3 6l2 3z" fill="#f0e0c0"/></svg>
<svg style="left:194.5px;top:621px" width="13" height="13"><rect x="0" y="0" width="13" height="13" fill="#2020a0"/><rect x="3" y="0.5" width="6" height="4" fill="#e0e0f0"/><rect x="2" y="6" width="9" height="6" fill="#f0b0c0"/></svg>
<div class="t" style="left:225.5px;top:619px;font-size:10px;color:#e0e0e0">»</div>
<div class="a" style="left:240.5px;top:626px;width:1px;height:14px;background:#333"></div>

<!-- buttons -->
<div class="a" style="left:254px;top:646px;width:113.5px;height:2px;background:#8ab8e0"></div>
<div class="a" style="left:373.7px;top:646px;width:114px;height:2px;background:#8ab8e0"></div>
<div class="a" style="left:494px;top:646px;width:113px;height:2px;background:#8ab8e0"></div>
<div class="a" style="left:614.7px;top:646px;width:113.3px;height:2px;background:#8ab8e0"></div>
<div class="a" style="left:735px;top:646px;width:114px;height:2px;background:#8ab8e0"></div>
<div class="a" style="left:853px;top:619px;width:119px;height:29px;background:#3a3a3a"></div>
<div class="a" style="left:853px;top:646px;width:119px;height:2px;background:#9ac8f0"></div>

<div class="a" style="left:260.5px;top:626.7px;width:14px;height:14px;border-radius:50%;background:conic-gradient(from -60deg,#dc3c2c 0 120deg,#f4c020 120deg 240deg,#2a9a48 240deg 360deg)"></div>
<div class="a" style="left:264px;top:630.2px;width:7px;height:7px;border-radius:50%;background:#4a8af0;border:1.2px solid #fff"></div>
<div class="t" style="left:279px;top:628.2px;font-size:8.8px;color:#eee;transform:scaleX(0.977);transform-origin:left center">General (Собрание...</div>
<div class="a" style="left:380px;top:626.7px;width:14px;height:14px;border-radius:50%;background:conic-gradient(from -60deg,#dc3c2c 0 120deg,#f4c020 120deg 240deg,#2a9a48 240deg 360deg)"></div>
<div class="a" style="left:383.5px;top:630.2px;width:7px;height:7px;border-radius:50%;background:#4a8af0;border:1.2px solid #fff"></div>
<div class="t" style="left:398.7px;top:628.2px;font-size:8.8px;color:#eee;transform:scaleX(1.011);transform-origin:left center">Приложению tea...</div>
<div class="a" style="left:499.5px;top:624.5px;width:16.5px;height:16.5px;border-radius:50%;background:#0c0c0c;border:1.2px solid #4e7078"></div>
<svg style="left:503.5px;top:627.5px" width="9" height="11"><path d="M4.5 0.5C7 0.5 8.5 2.5 8 4.5L6 8H3L1 4.5C0.5 2.5 2 0.5 4.5 0.5z" fill="#f4f4f4"/><circle cx="4.5" cy="3.8" r="1.2" fill="#111"/><rect x="3.3" y="8.3" width="2.4" height="2.2" fill="#f4f4f4"/></svg>
<div class="t" style="left:519px;top:628.2px;font-size:8.8px;color:#eee;transform:scaleX(0.937);transform-origin:left center">Epic Pen</div>
<svg style="left:622px;top:626px" width="11" height="15"><path d="M0 2h4l1 1.5h5.5v11H0z" fill="#e8c060"/><path d="M0 4h10.5v10.5H0z" fill="#f4d880"/></svg>
<div class="t" style="left:640px;top:628.2px;font-size:8.8px;color:#eee;transform:scaleX(0.920);transform-origin:left center">Ansys</div>
<div class="a" style="left:740px;top:625px;width:17.8px;height:17px;background:linear-gradient(135deg,#b8b8b8,#7a7a7a);color:#fff;font-size:10px;font-weight:bold;line-height:17px;text-align:center;letter-spacing:-0.6px">WB</div>
<div class="t" style="left:761px;top:628.2px;font-size:8.8px;color:#eee;transform:scaleX(0.966);transform-origin:left center">Unsaved Project - ...</div>
<div class="a" style="left:861px;top:625px;width:17px;height:17px;background:linear-gradient(160deg,#3a3ae0,#1a1ab0);color:#fff;font-size:10px;font-weight:bold;line-height:17px;text-align:center;letter-spacing:-0.6px">DM</div>
<div class="t" style="left:881px;top:628.2px;font-size:8.8px;color:#eee;transform:scaleX(0.949);transform-origin:left center">A: Fluid Flow (CFX) ...</div>

<!-- tray -->
<svg style="left:1041px;top:630.3px" width="11" height="7"><path d="M0.5 6L5.5 1 10.5 6" fill="none" stroke="#ddd" stroke-width="1.1"/></svg>
<svg style="left:1059px;top:627px" width="11" height="11"><path d="M1 10A9 9 0 0 1 10 1M3.5 10A6.5 6.5 0 0 1 10 3.5M6 10A4 4 0 0 1 10 6" fill="none" stroke="#ccc" stroke-width="1"/><rect x="8.5" y="8.5" width="2" height="2" fill="#fff"/></svg>
<svg style="left:1075px;top:627px" width="12" height="11"><path d="M0.5 3.5h2.5L6 0.5v10L3 7.5H0.5z" fill="none" stroke="#ccc" stroke-width="0.9"/><path d="M8 3.5q1.2 2 0 4M10 2q2 3.5 0 7" fill="none" stroke="#ccc" stroke-width="0.9"/></svg>
<div class="t" style="left:1096px;top:627.8px;font-size:8.6px;color:#eee">ENG</div>
<div class="t" style="left:1137px;top:620.8px;font-size:8.6px;color:#eee">13:10</div>
<div class="t" style="left:1124px;top:634px;font-size:8.4px;color:#eee">19 Feb 2021</div>
<svg style="left:1185px;top:627px" width="13" height="13"><path d="M0.5 0.5h12v8h-5l-3 3v-3h-4z" fill="#fff"/><path d="M2.5 3h8M2.5 5h8" stroke="#333" stroke-width="0.8"/></svg>

<div class="a" style="left:1212px;top:618px;width:1px;height:30px;background:#4a4a4a"></div>
<!-- TEAMS STRIP -->
<div class="a" style="left:346.5px;top:648px;width:133.5px;height:72px;background:#252525"></div>
<div class="a" style="left:480px;top:648px;width:133.5px;height:72px;background:#212121"></div>
<div class="a" style="left:613.5px;top:648px;width:133.5px;height:72px;background:#252525"></div>
<div class="a" style="left:747px;top:648px;width:133.5px;height:72px;background:#1f1f1f"></div>
<div class="a" style="left:880.5px;top:648px;width:133.5px;height:72px;background:#202020"></div>
<div class="a" style="left:1014px;top:648px;width:133.5px;height:72px;background:#1e1e1e"></div>
<div class="a" style="left:1147.5px;top:648px;width:132.5px;height:72px;background:#2f2f38"></div>
<div class="a" style="left:27px;top:664px;width:40px;height:40px;border-radius:50%;background:#4f5186;color:#f4f4f8;font-size:15.5px;line-height:40px;text-align:center"><span style="display:inline-block;transform:scaleX(0.85);-webkit-text-stroke:0.35px currentColor">+4</span></div>
<div class="a" style="left:93.3px;top:664px;width:40px;height:40px;border-radius:50%;background:#efd6cc;color:#4e1c10;font-size:15.5px;line-height:40px;text-align:center"><span style="display:inline-block;transform:scaleX(0.85);-webkit-text-stroke:0.35px currentColor">AE</span></div>
<div class="a" style="left:160px;top:664px;width:40px;height:40px;border-radius:50%;background:#f6d9d0;color:#4e1e12;font-size:15.5px;line-height:40px;text-align:center"><span style="display:inline-block;transform:scaleX(0.85);-webkit-text-stroke:0.35px currentColor">CC</span></div>
<div class="a" style="left:226.6px;top:664px;width:40px;height:40px;border-radius:50%;background:#dcdcf2;color:#161638;font-size:15.5px;line-height:40px;text-align:center"><span style="display:inline-block;transform:scaleX(0.85);-webkit-text-stroke:0.35px currentColor">ТВ</span></div>
<div class="a" style="left:293.3px;top:664px;width:40px;height:40px;border-radius:50%;background:#d6e2f0;color:#142036;font-size:15.5px;line-height:40px;text-align:center"><span style="display:inline-block;transform:scaleX(0.85);-webkit-text-stroke:0.35px currentColor">ГВ</span></div>
<div class="a" style="left:393.25px;top:664px;width:40px;height:40px;border-radius:50%;box-shadow:0 0 0 1.5px #141414;background:#dcdcf2;color:#161638;font-size:15.5px;line-height:40px;text-align:center"><span style="display:inline-block;transform:scaleX(0.85);-webkit-text-stroke:0.35px currentColor">CC</span></div>
<div class="a" style="left:526.75px;top:664px;width:40px;height:40px;border-radius:50%;box-shadow:0 0 0 1.5px #141414;background:#dcdcf2;color:#161638;font-size:15.5px;line-height:40px;text-align:center"><span style="display:inline-block;transform:scaleX(0.85);-webkit-text-stroke:0.35px currentColor">БС</span></div>
<div class="a" style="left:660.25px;top:664px;width:40px;height:40px;border-radius:50%;box-shadow:0 0 0 1.5px #141414;background:#dfe6cc;color:#1e2810;font-size:15.5px;line-height:40px;text-align:center"><span style="display:inline-block;transform:scaleX(0.85);-webkit-text-stroke:0.35px currentColor">AA</span></div>
<div class="a" style="left:793.75px;top:664px;width:40px;height:40px;border-radius:50%;box-shadow:0 0 0 1.5px #141414;background:#d8e4ee;color:#141e30;font-size:15.5px;line-height:40px;text-align:center"><span style="display:inline-block;transform:scaleX(0.85);-webkit-text-stroke:0.35px currentColor">ФВ</span></div>
<div class="a" style="left:927.25px;top:664px;width:40px;height:40px;border-radius:50%;box-shadow:0 0 0 1.5px #141414;background:#d4ecd8;color:#122a16;font-size:15.5px;line-height:40px;text-align:center"><span style="display:inline-block;transform:scaleX(0.85);-webkit-text-stroke:0.35px currentColor">ЛН</span></div>
<div class="a" style="left:1060.75px;top:664px;width:40px;height:40px;border-radius:50%;box-shadow:0 0 0 1.5px #141414;background:#d6e4ee;color:#121e2a;font-size:15.5px;line-height:40px;text-align:center"><span style="display:inline-block;transform:scaleX(0.85);-webkit-text-stroke:0.35px currentColor">ЩВ</span></div>
<div class="t" style="left:354.5px;top:706.6px;font-size:7.6px;color:#f0f0f0;-webkit-text-stroke:0.2px #f0f0f0">Севостьянов Дмитрий Сергеевич</div>
<div class="t" style="left:488px;top:706.6px;font-size:7.6px;color:#f0f0f0;-webkit-text-stroke:0.2px #f0f0f0">Быковский Владимир Сергеевич</div>
<div class="t" style="left:621.5px;top:706.6px;font-size:7.6px;color:#f0f0f0;-webkit-text-stroke:0.2px #f0f0f0">Агасов Владимир Андреевич</div>
<div class="t" style="left:754.5px;top:706.6px;font-size:7.6px;color:#f0f0f0;-webkit-text-stroke:0.2px #f0f0f0">Фролова Юлия Владимировна</div>
<div class="t" style="left:887.5px;top:706.6px;font-size:7.6px;color:#f0f0f0;-webkit-text-stroke:0.2px #f0f0f0">Лашин Павел Николаевич</div>
<div class="t" style="left:1021px;top:706.6px;font-size:7.6px;color:#f0f0f0;-webkit-text-stroke:0.2px #f0f0f0">Щербак Илья Владимирович</div>
<div class="t" style="left:1155px;top:706.6px;font-size:7.6px;color:#f0f0f0;-webkit-text-stroke:0.2px #f0f0f0">Молчанов Александр Михайлович</div>
<div class="a" style="left:1194px;top:663.8px;width:39px;height:39px;border-radius:50%;background:#050505"></div>
<svg style="left:1193px;top:663px" width="40" height="40"><path d="M12 4Q22 2 33 4Q39 10 37.5 20Q33 31 21 37Q9 30 4.5 20Q3 13 4.5 9Q9 8 12 4z" fill="#1e8ad6" stroke="#90e8ff" stroke-width="1.6"/><path d="M8 16.5Q19 14.5 30 16" stroke="#e8f8ff" stroke-width="1.2" fill="none"/><path d="M10 19L23 9.5" stroke="#e8f8ff" stroke-width="1.5"/><path d="M20 9.5h5" stroke="#e8f8ff" stroke-width="1"/><text x="11" y="27.5" font-size="8.3" font-weight="bold" font-family="Liberation Serif" fill="#f0f8ff">МАИ</text></svg>
</body></html>
